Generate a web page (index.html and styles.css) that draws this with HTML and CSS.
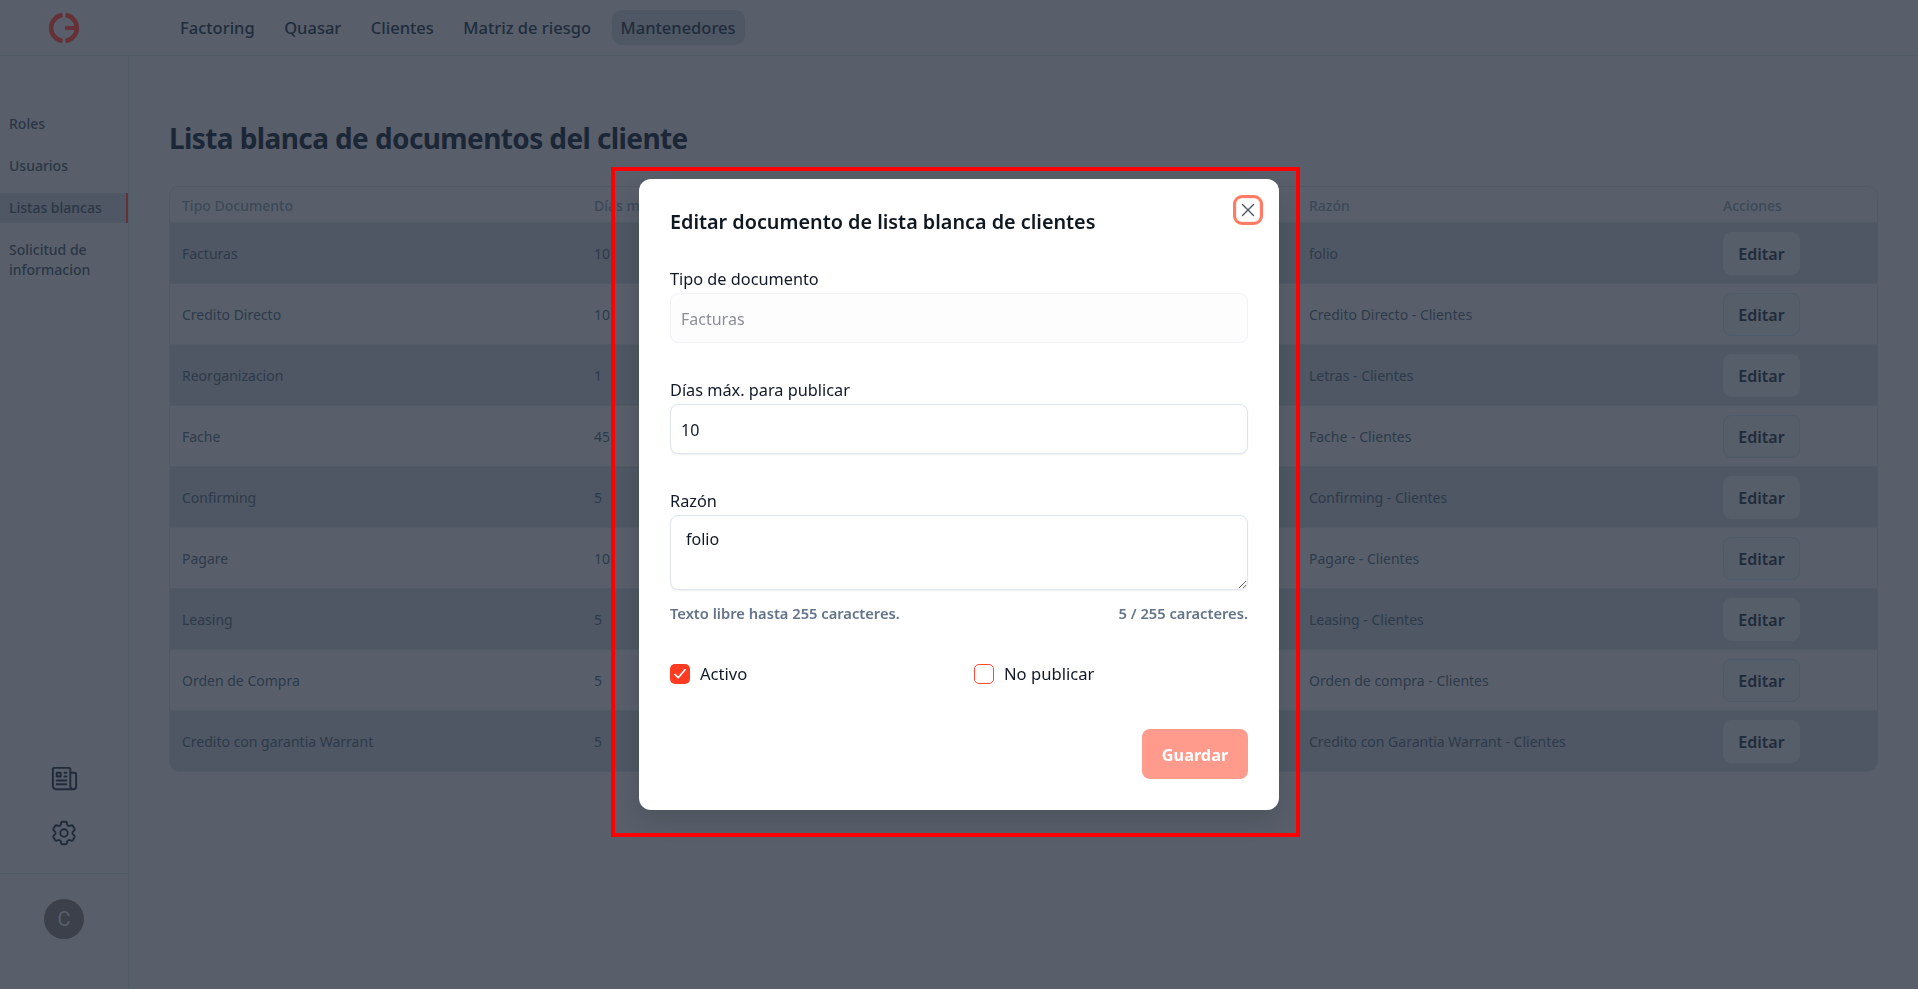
FILE: index.html
```html
<!DOCTYPE html>
<html lang="es">
<head>
  <meta charset="UTF-8" />
  <title>Lista blanca de documentos</title>
  <link rel="stylesheet" href="styles.css">
</head>
<body>
  <header class="topbar">
    <div class="logo-cell">
      <svg class="logo" viewBox="0 0 32 32" width="32" height="32" fill="none" stroke="#663037" stroke-width="4.5">
        <path d="M14.5 3.1a13 13 0 0 0 0 25.8"/>
        <path d="M17.5 3.1a13 13 0 0 1 0 25.8"/>
        <path d="M17 16h12" stroke-width="4"/>
      </svg>
    </div>
    <nav class="topnav">
      <a>Factoring</a>
      <a>Quasar</a>
      <a>Clientes</a>
      <a>Matriz de riesgo</a>
      <a class="active">Mantenedores</a>
    </nav>
  </header>

  <div class="layout">
    <aside class="sidebar">
      <nav class="sidenav">
        <a>Roles</a>
        <a>Usuarios</a>
        <a class="active">Listas blancas</a>
        <a>Solicitud de informacion</a>
      </nav>
      <div class="side-icons">
        <svg viewBox="0 0 24 24" width="31" height="31" fill="none" stroke="#1f2b3b" stroke-width="1.5" stroke-linecap="round" stroke-linejoin="round">
          <path d="M12 7.5h1.5m-1.5 3h1.5m-7.5 3h7.5m-7.5 3h7.5m3-9h3.375c.621 0 1.125.504 1.125 1.125V18a2.25 2.25 0 0 1-2.25 2.25M16.5 7.5V18a2.25 2.25 0 0 0 2.25 2.25M16.5 7.5V4.875c0-.621-.504-1.125-1.125-1.125H4.125C3.504 3.75 3 4.254 3 4.875V18a2.25 2.25 0 0 0 2.25 2.25h13.5M6 7.5h3v3H6v-3Z"/>
        </svg>
        <svg viewBox="0 0 24 24" width="30" height="30" fill="none" stroke="#1f2b3b" stroke-width="1.5" stroke-linecap="round" stroke-linejoin="round">
          <path d="M9.594 3.94c.09-.542.56-.94 1.11-.94h2.593c.55 0 1.02.398 1.11.94l.213 1.281c.063.374.313.686.645.87.074.04.147.083.22.127.325.196.72.257 1.075.124l1.217-.456a1.125 1.125 0 0 1 1.37.49l1.296 2.247a1.125 1.125 0 0 1-.26 1.431l-1.003.827c-.293.241-.438.613-.43.992a7.723 7.723 0 0 1 0 .255c-.008.378.137.75.43.991l1.004.827c.424.35.534.955.26 1.43l-1.298 2.247a1.125 1.125 0 0 1-1.369.491l-1.217-.456c-.355-.133-.75-.072-1.076.124a6.47 6.47 0 0 1-.22.128c-.331.183-.581.495-.644.869l-.213 1.281c-.09.543-.56.94-1.11.94h-2.594c-.55 0-1.019-.398-1.11-.94l-.213-1.281c-.062-.374-.312-.686-.644-.87a6.52 6.52 0 0 1-.22-.127c-.325-.196-.72-.257-1.076-.124l-1.217.456a1.125 1.125 0 0 1-1.369-.49l-1.297-2.247a1.125 1.125 0 0 1 .26-1.431l1.004-.827c.292-.24.437-.613.43-.991a6.932 6.932 0 0 1 0-.255c.007-.38-.138-.751-.43-.992l-1.004-.827a1.125 1.125 0 0 1-.26-1.43l1.297-2.247a1.125 1.125 0 0 1 1.37-.491l1.216.456c.356.133.751.072 1.076-.124.072-.044.146-.086.22-.128.332-.183.582-.495.644-.869l.214-1.28Z"/>
          <path d="M15 12a3 3 0 1 1-6 0 3 3 0 0 1 6 0Z"/>
        </svg>
      </div>
      <div class="side-user">
        <div class="avatar">C</div>
      </div>
    </aside>

    <main class="content">
      <h1>Lista blanca de documentos del cliente</h1>
      <div class="table-wrap">
        <table>
          <thead>
            <tr><th>Tipo Documento</th><th>Días máx.</th><th></th><th>Razón</th><th>Acciones</th></tr>
          </thead>
          <tbody>
            <tr><td>Facturas</td><td>10</td><td></td><td>folio</td><td><button>Editar</button></td></tr>
            <tr><td>Credito Directo</td><td>10</td><td></td><td>Credito Directo - Clientes</td><td><button>Editar</button></td></tr>
            <tr><td>Reorganizacion</td><td>1</td><td></td><td>Letras - Clientes</td><td><button>Editar</button></td></tr>
            <tr><td>Fache</td><td>45</td><td></td><td>Fache - Clientes</td><td><button>Editar</button></td></tr>
            <tr><td>Confirming</td><td>5</td><td></td><td>Confirming - Clientes</td><td><button>Editar</button></td></tr>
            <tr><td>Pagare</td><td>10</td><td></td><td>Pagare - Clientes</td><td><button>Editar</button></td></tr>
            <tr><td>Leasing</td><td>5</td><td></td><td>Leasing - Clientes</td><td><button>Editar</button></td></tr>
            <tr><td>Orden de Compra</td><td>5</td><td></td><td>Orden de compra - Clientes</td><td><button>Editar</button></td></tr>
            <tr><td>Credito con garantia Warrant</td><td>5</td><td></td><td>Credito con Garantia Warrant - Clientes</td><td><button>Editar</button></td></tr>
          </tbody>
        </table>
      </div>
    </main>
  </div>

  <div class="modal-layer">
    <div class="modal">
      <button class="modal-close" aria-label="Cerrar">
        <svg viewBox="0 0 14 14" width="14" height="14" fill="none" stroke="#4b5563" stroke-width="1.4" stroke-linecap="round">
          <path d="M1.5 1.5l11 11M12.5 1.5l-11 11"/>
        </svg>
      </button>
      <h2>Editar documento de lista blanca de clientes</h2>

      <label class="field-label">Tipo de documento</label>
      <input class="field field-disabled" value="Facturas" disabled>

      <label class="field-label">Días máx. para publicar</label>
      <input class="field" value="10">

      <label class="field-label">Razón</label>
      <textarea class="field field-area">folio</textarea>
      <div class="hints">
        <span>Texto libre hasta 255 caracteres.</span>
        <span>5 / 255 caracteres.</span>
      </div>

      <div class="checks">
        <label class="check">
          <span class="box checked">
            <svg viewBox="0 0 20 20" width="20" height="20" fill="none" stroke="#fff" stroke-width="1.7" stroke-linecap="round" stroke-linejoin="round"><path d="M5 10.5l3.2 3.2 6.8-8"/></svg>
          </span>
          Activo
        </label>
        <label class="check">
          <span class="box"></span>
          No publicar
        </label>
      </div>

      <div class="modal-actions">
        <button class="save">Guardar</button>
      </div>
    </div>
  </div>

  <div class="marker"></div>
</body>
</html>
```

FILE: styles.css
```css
* {
  margin: 0;
  padding: 0;
  box-sizing: border-box;
  font-family: "Noto Sans", "Open Sans", sans-serif;
}

body {
  height: 989px;
  overflow: hidden;
  background: #585f6a;
  color: #2a3645;
  display: flex;
  flex-direction: column;
}

.topbar {
  height: 56px;
  display: flex;
  align-items: center;
  border-bottom: 1px solid #505a65;
}

.logo-cell {
  width: 128px;
  display: flex;
  justify-content: center;
}

.topnav {
  display: flex;
  gap: 11.5px;
  padding-left: 43px;
}

.topnav a {
  padding: 0 9px;
  height: 35px;
  line-height: 35px;
  border-radius: 10px;
  font-size: 16.5px;
  font-weight: 500;
  color: #202c3c;
}

.topnav a.active {
  background: #4e5763;
}

.layout {
  flex: 1;
  display: flex;
  min-height: 0;
}

.sidebar {
  width: 129px;
  border-right: 1px solid #505a65;
  display: flex;
  flex-direction: column;
}

.sidenav {
  padding-top: 53px;
  display: flex;
  flex-direction: column;
  gap: 12px;
}

.sidenav a {
  padding: 5px 9px;
  font-size: 14px;
  line-height: 20px;
  font-weight: 500;
  color: #2a3645;
}

.sidenav a.active {
  background: #4e5763;
  border-right: 2px solid #663037;
}

.side-icons {
  margin-top: auto;
  display: flex;
  flex-direction: column;
  align-items: center;
  gap: 24px;
  padding-bottom: 25px;
}

.side-user {
  height: 116px;
  border-top: 1px solid #505a65;
  padding-top: 25px;
  display: flex;
  justify-content: center;
}

.avatar {
  width: 40px;
  height: 40px;
  border-radius: 50%;
  background: #3b404b;
  color: #585f6a;
  font-size: 20px;
  font-family: Roboto, sans-serif;
  display: flex;
  align-items: center;
  justify-content: center;
}

.content {
  flex: 1;
  padding: 64px 40px 0 40px;
}

.content h1 {
  font-size: 28px;
  line-height: 36px;
  font-weight: 700;
  letter-spacing: -0.6px;
  color: #1b2636;
  margin-bottom: 30px;
}

.table-wrap {
  border: 1px solid #505a65;
  border-radius: 10px;
  overflow: hidden;
}

table {
  width: 100%;
  border-collapse: collapse;
  table-layout: fixed;
}

th:nth-child(1), td:nth-child(1) { width: 412px; }
th:nth-child(2), td:nth-child(2) { width: 358px; }
th:nth-child(3), td:nth-child(3) { width: 357px; }
th:nth-child(4), td:nth-child(4) { width: 414px; }

th {
  height: 35px;
  padding: 2px 12px 0;
  text-align: left;
  font-size: 14px;
  font-weight: 500;
  color: #3c4858;
}

td {
  height: 61px;
  padding: 2px 12px 0;
  font-size: 14px;
  color: #2d3a4a;
}

tbody tr {
  border-top: 1px solid #505a65;
}

tbody tr:nth-child(odd) {
  background: #4e5763;
}

td button {
  width: 77px;
  height: 43px;
  background: #565e69;
  border: 1px solid #4d5a69;
  border-radius: 8px;
  font-size: 16px;
  font-weight: 600;
  color: #1f2b3b;
}

tbody tr:nth-child(odd) td button {
  border-color: #565e69;
}

.modal-layer {
  position: fixed;
  inset: 0;
  display: flex;
  align-items: center;
  justify-content: center;
}

.modal {
  position: relative;
  width: 640px;
  height: 631px;
  background: #fff;
  border-radius: 12px;
  padding: 29px 31px;
  color: #111827;
  box-shadow: 0 10px 25px rgba(0, 0, 0, 0.12);
}

.modal-close {
  position: absolute;
  top: 16px;
  right: 16px;
  width: 30px;
  height: 30px;
  background: #fff;
  border: 3px solid #ff7b66;
  border-radius: 9px;
  box-shadow: inset 0 0 0 1px #ffeeea;
  display: flex;
  align-items: center;
  justify-content: center;
}

.modal h2 {
  font-size: 19.8px;
  line-height: 28px;
  font-weight: 600;
  color: #0f1720;
  margin-bottom: 31px;
}

.field-label {
  display: block;
  font-size: 16.3px;
  line-height: 24px;
  margin-bottom: 2px;
}

.field {
  display: block;
  width: 100%;
  height: 50px;
  margin-bottom: 35px;
  padding: 2px 10px 0;
  background: #fff;
  border: 1px solid #dfe5ee;
  border-radius: 8px;
  box-shadow: 0 1px 2px rgba(15, 23, 42, 0.06);
  font-size: 16px;
  color: #111827;
  outline: none;
}

.field-disabled {
  background: #fdfdfe;
  border: 1px solid #f1f3f6;
  box-shadow: none;
  color: #8b8f96;
}

.field-area {
  height: 75px;
  margin-bottom: 0;
  padding: 11px 15px;
  line-height: 24px;
}

.hints {
  display: flex;
  justify-content: space-between;
  margin-top: 13px;
  font-size: 14.7px;
  line-height: 20px;
  font-weight: 600;
  color: #64748b;
}

.checks {
  display: grid;
  grid-template-columns: 304px 1fr;
  margin-top: 40px;
}

.check {
  display: flex;
  align-items: center;
  gap: 10px;
  font-size: 16.6px;
  line-height: 22px;
}

.box {
  width: 20px;
  height: 20px;
  border: 1px solid #ff4b33;
  border-radius: 5px;
  background: #fff;
}

.box.checked {
  background: #ff3b22;
  border: 0;
}

.box svg {
  display: block;
}

.modal-actions {
  display: flex;
  justify-content: flex-end;
  margin-top: 44px;
}

.save {
  width: 106px;
  height: 50px;
  padding-top: 2px;
  background: #ff9b8d;
  border: 0;
  border-radius: 8px;
  font-size: 16.3px;
  font-weight: 700;
  color: #fff;
}

.marker {
  position: fixed;
  left: 611px;
  top: 167px;
  width: 689px;
  height: 670px;
  border: 4px solid #ff0000;
  pointer-events: none;
}
```
